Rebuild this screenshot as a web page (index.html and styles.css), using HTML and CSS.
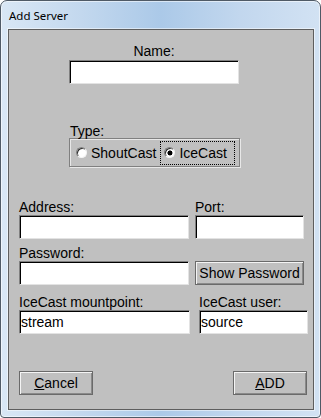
FILE: index.html
```html
<!DOCTYPE html>
<html lang="en">
<head>
    <meta charset="UTF-8">
    <meta name="viewport" content="width=device-width, initial-scale=1.0">
    <title>Add Server</title>
    <link rel="stylesheet" href="styles.css">
</head>
<body>
    <div class="window">
        <div class="titlebar">
            <span class="title">Add Server</span>
        </div>
        <div class="panel">
            <div class="name-block">
                <label class="lbl" for="serverName">Name:</label>
                <input class="field" type="text" id="serverName">
            </div>

            <div class="type-block">
                <div class="lbl">Type:</div>
                <div class="group">
                    <label class="radio"><span class="dot"></span>ShoutCast</label>
                    <label class="radio focused"><span class="dot checked"></span>IceCast</label>
                </div>
            </div>

            <div class="row row-address">
                <div class="col col-main">
                    <label class="lbl" for="address">Address:</label>
                    <input class="field" type="text" id="address">
                </div>
                <div class="col col-side">
                    <label class="lbl" for="port">Port:</label>
                    <input class="field" type="text" id="port">
                </div>
            </div>

            <div class="row row-password">
                <div class="col col-main">
                    <label class="lbl" for="password">Password:</label>
                    <input class="field" type="password" id="password">
                </div>
                <div class="col col-side">
                    <button class="btn btn-show">Show Password</button>
                </div>
            </div>

            <div class="row row-icecast">
                <div class="col col-mount">
                    <label class="lbl" for="mount">IceCast mountpoint:</label>
                    <input class="field" type="text" id="mount" value="stream">
                </div>
                <div class="col col-side">
                    <label class="lbl" for="user">IceCast user:</label>
                    <input class="field" type="text" id="user" value="source">
                </div>
            </div>

            <div class="actions">
                <button class="btn btn-action"><u>C</u>ancel</button>
                <button class="btn btn-action"><u>A</u>DD</button>
            </div>
        </div>
    </div>
</body>
</html>
```

FILE: styles.css
```css
:root {
    --frame-border: #4f5a66;
    --panel-bg: #c0c0c0;
    --panel-border: #5e5e5e;
    --text-color: #000;
    --shadow-dark: #808080;
    --shadow-light: #e3e3e3;
}

body {
    margin: 0;
    padding: 0;
    background: #fff;
    font-family: 'Liberation Sans', Arial, sans-serif;
    color: var(--text-color);
}

.window {
    width: 321px;
    height: 418px;
    box-sizing: border-box;
    border: 1px solid var(--frame-border);
    border-radius: 7px 7px 4px 4px;
    padding: 0 6px 7px 7px;
    background: linear-gradient(to right, #d9e7f5 0%, #c3d8ee 25%, #abc9e8 50%, #c2d7ee 75%, #d2e2f3 100%);
    box-shadow: inset 0 0 0 1px rgba(255, 255, 255, 0.55);
}

.titlebar {
    height: 28px;
    display: flex;
    align-items: center;
    padding-left: 1px;
}

.title {
    font-family: 'Noto Sans', 'Open Sans', sans-serif;
    font-size: 11.5px;
    color: #000;
    padding-top: 1px;
}

.panel {
    height: 381px;
    box-sizing: border-box;
    background: var(--panel-bg);
    border: 1px solid var(--panel-border);
    box-shadow: 0 0 0 1px rgba(255, 255, 255, 0.5);
    font-size: 14px;
}

.lbl {
    display: block;
    line-height: 16px;
    height: 16px;
    white-space: nowrap;
}

.field {
    display: block;
    box-sizing: border-box;
    height: 24px;
    margin: 0;
    padding: 0 1px;
    font-family: 'Liberation Sans', Arial, sans-serif;
    font-size: 14px;
    color: #000;
    background: #fff;
    border: 1px solid;
    border-color: var(--shadow-dark) var(--shadow-light) var(--shadow-light) var(--shadow-dark);
    box-shadow: inset 1px 1px 0 #000;
    outline: none;
    border-radius: 0;
}

/* name */
.name-block {
    width: 170px;
    margin: 13px 0 0 60px;
    text-align: center;
}
.name-block .field {
    width: 170px;
    margin-top: 1px;
}

/* type radio group */
.type-block {
    margin: 39px 0 0 60px;
}
.type-block .lbl {
    padding-left: 1px;
}
.group {
    width: 171px;
    height: 29px;
    box-sizing: border-box;
    margin-top: -1px;
    border: 1px solid var(--shadow-dark);
    box-shadow: inset 1px 1px 0 #e8e8e8, 1px 1px 0 #e8e8e8;
    display: flex;
    align-items: center;
    padding: 0 0 0 6px;
}
.radio {
    display: flex;
    align-items: center;
    gap: 4px;
    height: 24px;
    white-space: nowrap;
}
.radio.focused {
    box-sizing: border-box;
    width: 75px;
    margin-left: 4px;
    padding-left: 3px;
    border: 1px dotted #000;
}
.dot {
    width: 11px;
    height: 11px;
    box-sizing: border-box;
    border-radius: 50%;
    background: #fff;
    border: 1px solid;
    border-color: #808080 #f4f4f4 #f4f4f4 #808080;
    box-shadow: inset 1px 1px 0 #303030;
}
.dot.checked {
    background: radial-gradient(circle at 55% 55%, #000 2.2px, #fff 2.8px);
}

/* rows */
.row {
    display: flex;
    margin-left: 10px;
}
.col .field {
    width: 100%;
}
.row-address {
    margin-top: 32px;
    gap: 6px;
}
.row-password {
    margin-top: 6px;
    gap: 6px;
    align-items: flex-end;
}
.row-icecast {
    margin-top: 9px;
    gap: 9px;
}
.col-main {
    width: 170px;
}
.col-mount {
    width: 171px;
}
.col-side {
    width: 109px;
}

/* buttons */
.btn {
    display: block;
    box-sizing: border-box;
    height: 24px;
    margin: 0;
    padding: 0;
    font-family: 'Liberation Sans', Arial, sans-serif;
    font-size: 14px;
    color: #000;
    background: var(--panel-bg);
    border: 1px solid #6a6a6a;
    box-shadow: inset 1px 1px 0 #f4f4f4, inset -1px -1px 0 #8a8a8a;
    border-radius: 0;
}
.btn-show {
    width: 109px;
}
.btn-action {
    width: 74px;
}
.actions {
    display: flex;
    justify-content: space-between;
    margin: 37px 6px 0 10px;
}
```
